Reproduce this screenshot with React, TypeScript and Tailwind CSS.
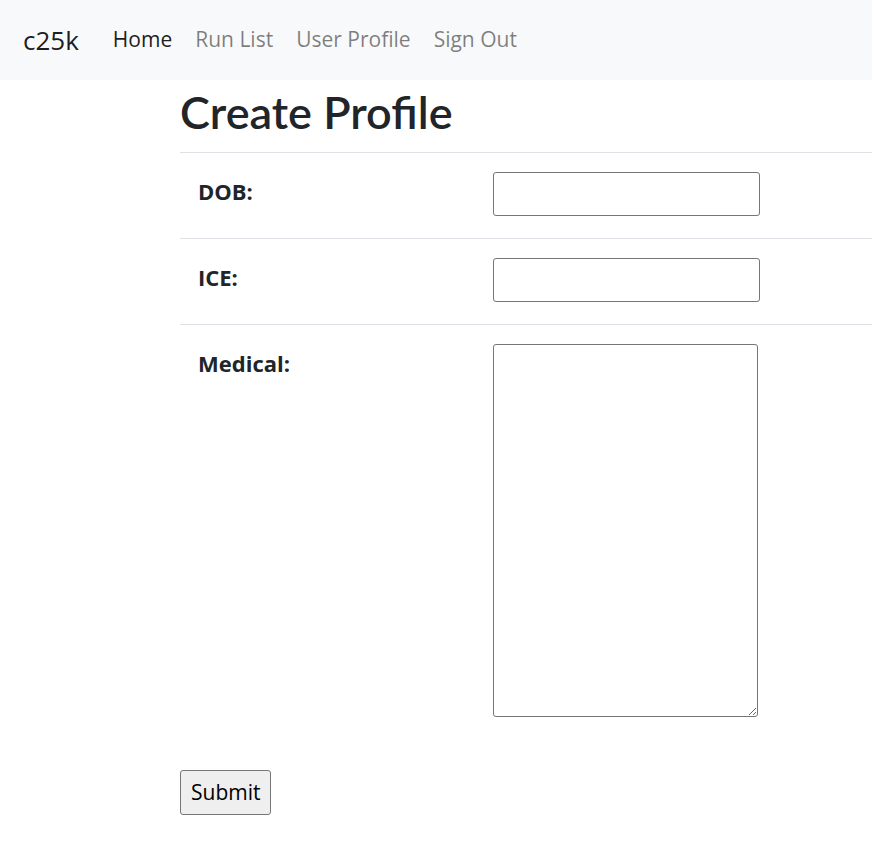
const navLinks = [
  { name: 'Home', active: true },
  { name: 'Run List', active: false },
  { name: 'User Profile', active: false },
  { name: 'Sign Out', active: false },
];

const fields = [
  { label: 'DOB:', type: 'input' },
  { label: 'ICE:', type: 'input' },
  { label: 'Medical:', type: 'textarea' },
];

export default function App() {
  return (
    <div className="min-h-screen bg-white text-[#212529] font-['Open_Sans',sans-serif]">
      <nav className="h-[80px] bg-[#f8f9fa] flex items-center px-[23px]">
        <a href="#" className="text-[26px] text-black/90 mr-[34px] leading-none">c25k</a>
        <div className="flex gap-[23px] text-[21px]">
          {navLinks.map((l) => (
            <a key={l.name} href="#" className={l.active ? 'text-black/90' : 'text-black/50'}>
              {l.name}
            </a>
          ))}
        </div>
      </nav>

      <div className="pl-[180px]">
        <h1 className="font-['Lato',sans-serif] text-[45px] font-semibold leading-[1.2] mt-[5px] mb-[13px]">
          Create Profile
        </h1>
        <form onSubmit={(e) => e.preventDefault()}>
          <table className="w-full border-collapse">
            <tbody>
              {fields.map((f) => (
                <tr key={f.label} className="border-t border-[#dee2e6] align-top">
                  <th className="w-[295px] text-left font-bold text-[22px] px-[18px] pt-[22px] pb-[22px]">
                    {f.label}
                  </th>
                  <td className="px-[18px] pt-[19px] pb-[22px]">
                    {f.type === 'input' ? (
                      <input
                        type="text"
                        className="block w-[267px] h-[44px] border border-[#767676] rounded-[3px] bg-white"
                      />
                    ) : (
                      <textarea className="block w-[265px] h-[373px] border border-[#767676] rounded-[3px] bg-white" />
                    )}
                  </td>
                </tr>
              ))}
            </tbody>
          </table>
          <button
            type="submit"
            className="mt-[31px] h-[45px] px-[10px] text-[21px] bg-[#efefef] border border-[#767676] rounded-[3px] text-black"
          >
            Submit
          </button>
        </form>
      </div>
    </div>
  );
}
